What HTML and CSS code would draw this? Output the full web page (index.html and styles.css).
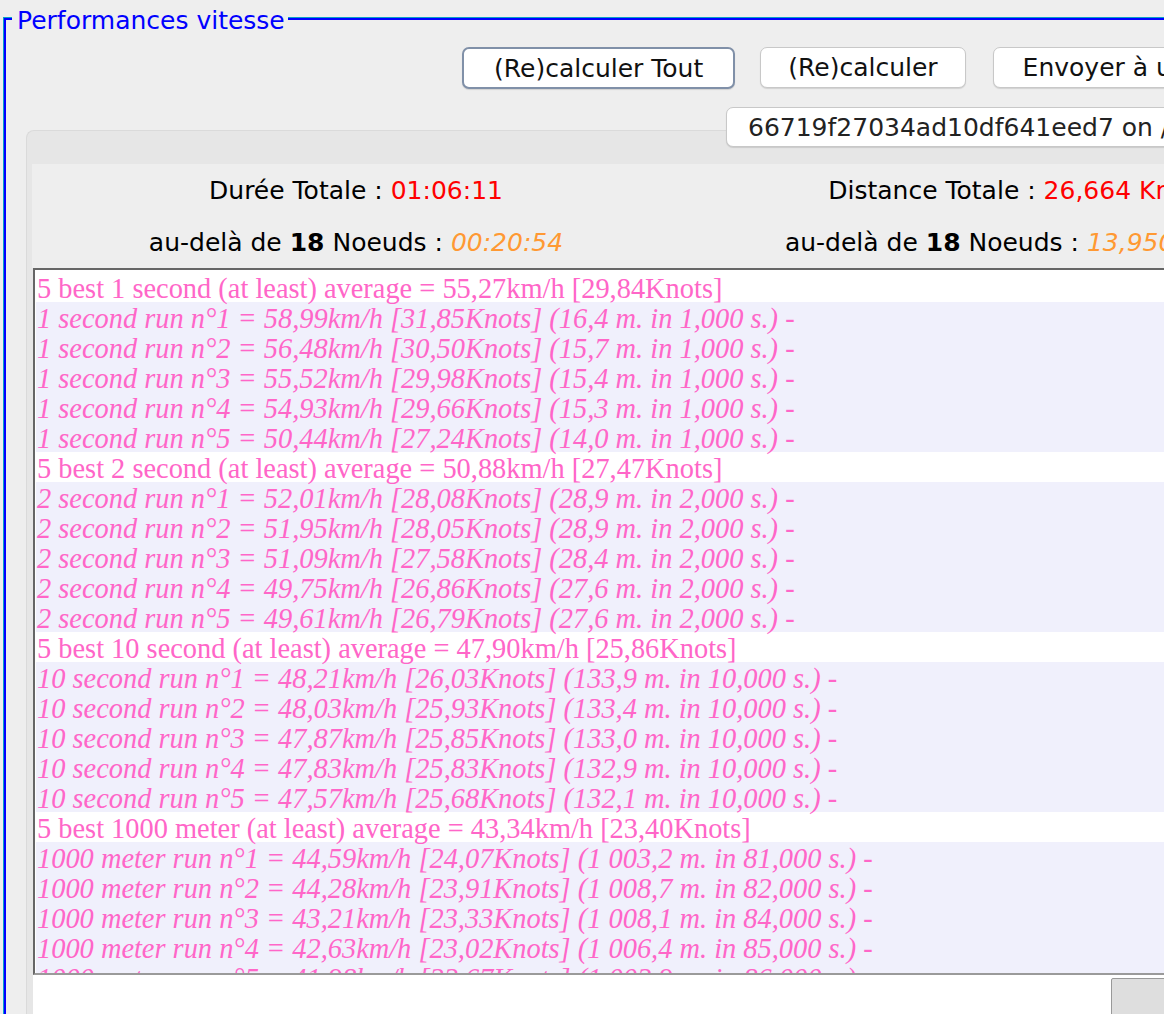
FILE: index.html
```html
<!DOCTYPE html>
<html lang="fr">
<head>
<meta charset="utf-8">
<title>Performances vitesse</title>
<link rel="stylesheet" href="styles.css">
</head>
<body>
<div class="frame">
  <div class="frame-inner">
    <div class="legend">Performances vitesse</div>
    <div class="toolbar">
      <button class="btn btn-focus">(Re)calculer Tout</button>
      <button class="btn btn-calc">(Re)calculer</button>
      <button class="btn btn-send">Envoyer à un ami</button>
    </div>
    <div class="toolbar2">
      <button class="btn btn-id">66719f27034ad10df641eed7 on /</button>
    </div>
    <div class="panel">
      <div class="stats">
        <div class="stat">Durée Totale : <span class="red">01:06:11</span></div>
        <div class="stat">Distance Totale : <span class="red">26,664 Km</span></div>
        <div class="stat">au-delà de <b>18</b> Noeuds : <span class="orange">00:20:54</span></div>
        <div class="stat">au-delà de <b>18</b> Noeuds : <span class="orange">13,950 Km</span></div>
      </div>
      <div class="results">
        <div class="head">5 best 1 second (at least) average = 55,27km/h [29,84Knots]</div>
        <div class="run">1 second run n°1 = 58,99km/h [31,85Knots] (16,4 m. in 1,000 s.) -</div>
        <div class="run">1 second run n°2 = 56,48km/h [30,50Knots] (15,7 m. in 1,000 s.) -</div>
        <div class="run">1 second run n°3 = 55,52km/h [29,98Knots] (15,4 m. in 1,000 s.) -</div>
        <div class="run">1 second run n°4 = 54,93km/h [29,66Knots] (15,3 m. in 1,000 s.) -</div>
        <div class="run">1 second run n°5 = 50,44km/h [27,24Knots] (14,0 m. in 1,000 s.) -</div>
        <div class="head">5 best 2 second (at least) average = 50,88km/h [27,47Knots]</div>
        <div class="run">2 second run n°1 = 52,01km/h [28,08Knots] (28,9 m. in 2,000 s.) -</div>
        <div class="run">2 second run n°2 = 51,95km/h [28,05Knots] (28,9 m. in 2,000 s.) -</div>
        <div class="run">2 second run n°3 = 51,09km/h [27,58Knots] (28,4 m. in 2,000 s.) -</div>
        <div class="run">2 second run n°4 = 49,75km/h [26,86Knots] (27,6 m. in 2,000 s.) -</div>
        <div class="run">2 second run n°5 = 49,61km/h [26,79Knots] (27,6 m. in 2,000 s.) -</div>
        <div class="head">5 best 10 second (at least) average = 47,90km/h [25,86Knots]</div>
        <div class="run">10 second run n°1 = 48,21km/h [26,03Knots] (133,9 m. in 10,000 s.) -</div>
        <div class="run">10 second run n°2 = 48,03km/h [25,93Knots] (133,4 m. in 10,000 s.) -</div>
        <div class="run">10 second run n°3 = 47,87km/h [25,85Knots] (133,0 m. in 10,000 s.) -</div>
        <div class="run">10 second run n°4 = 47,83km/h [25,83Knots] (132,9 m. in 10,000 s.) -</div>
        <div class="run">10 second run n°5 = 47,57km/h [25,68Knots] (132,1 m. in 10,000 s.) -</div>
        <div class="head">5 best 1000 meter (at least) average = 43,34km/h [23,40Knots]</div>
        <div class="run">1000 meter run n°1 = 44,59km/h [24,07Knots] (1 003,2 m. in 81,000 s.) -</div>
        <div class="run">1000 meter run n°2 = 44,28km/h [23,91Knots] (1 008,7 m. in 82,000 s.) -</div>
        <div class="run">1000 meter run n°3 = 43,21km/h [23,33Knots] (1 008,1 m. in 84,000 s.) -</div>
        <div class="run">1000 meter run n°4 = 42,63km/h [23,02Knots] (1 006,4 m. in 85,000 s.) -</div>
        <div class="run">1000 meter run n°5 = 41,98km/h [22,67Knots] (1 002,9 m. in 86,000 s.) -</div>
      </div>
      <div class="footer">
        <button class="btn-small"></button>
      </div>
    </div>
  </div>
</div>
</body>
</html>
```
FILE: styles.css
```css
html, body {
  margin: 0;
  padding: 0;
}
body {
  background: #eeeeee;
  width: 1164px;
  height: 1014px;
  overflow: hidden;
  font-family: "DejaVu Sans", "Liberation Sans", sans-serif;
}
.frame {
  margin: 17px 0 0 3px;
  width: 1500px;
  height: 1200px;
  border-top: 1px solid #0aa0c8;
  border-left: 1px solid #0aa0c8;
  box-sizing: border-box;
}
.frame-inner {
  position: relative;
  height: 100%;
  border-top: 2px solid #0000ff;
  border-left: 2px solid #0000ff;
  box-sizing: border-box;
}
.legend {
  position: absolute;
  left: 6px;
  top: -13px;
  padding: 0 3px 0 5px;
  background: #eeeeee;
  color: #0000ff;
  font-size: 25px;
  line-height: 28px;
}
.toolbar {
  display: flex;
  gap: 25px;
  padding: 27px 0 0 456px;
}
.btn {
  font-family: "DejaVu Sans", "Liberation Sans", sans-serif;
  font-size: 25px;
  color: #111;
  background: #ffffff;
  border: 1px solid #c8c8c8;
  border-radius: 7px;
  height: 41px;
  padding: 0 29px;
  box-shadow: 0 1px 1px rgba(0,0,0,0.12);
  white-space: nowrap;
}
.btn-focus {
  border: 2px solid #8090a8;
  height: 42px;
  padding: 0 30px;
}
.btn-calc {
  padding: 0 27px;
}
.btn-send {
  margin-left: 2px;
}
.toolbar2 {
  display: flex;
  padding: 18px 0 0 720px;
  margin-bottom: -17px;
  position: relative;
  z-index: 1;
}
.btn-id {
  height: 40px;
  padding: 0 21px;
  color: #222;
}
.panel {
  margin-left: 20px;
  background: #e6e6e6;
  border-top: 1px solid #dadada;
  border-left: 1px solid #dadada;
  border-radius: 8px 0 0 0;
  padding: 33px 0 0 5px;
  height: 1000px;
}
.stats {
  display: grid;
  grid-template-columns: 648px 648px;
  grid-auto-rows: 52px;
  background: #eeeeee;
  font-size: 25px;
  color: #000;
  align-items: center;
  text-align: center;
}
.stat b { font-weight: bold; }
.red { color: #ff0000; }
.orange { color: #ff9933; font-style: italic; }
.results {
  margin-left: 1px;
  background: #ffffff;
  border-top: 2px solid #666666;
  border-left: 2px solid #666666;
  border-bottom: 2px solid #9a9a9a;
  overflow: hidden;
  padding: 2px 0 0 1px;
  box-sizing: border-box;
  height: 707px;
  font-family: "Liberation Serif", "Times New Roman", serif;
  font-size: 28.4px;
  color: #ff66c8;
}
.head, .run {
  height: 30px;
  line-height: 34px;
  padding-left: 1px;
  white-space: nowrap;
}
.run {
  background: #f0f0fc;
  font-style: italic;
}
.footer {
  margin-left: 1px;
  background: #ffffff;
  height: 60px;
  padding: 3px 0 0 1078px;
}
.btn-small {
  width: 80px;
  height: 60px;
  background: #dedede;
  border: 1px solid #999;
  border-radius: 2px;
}
```
